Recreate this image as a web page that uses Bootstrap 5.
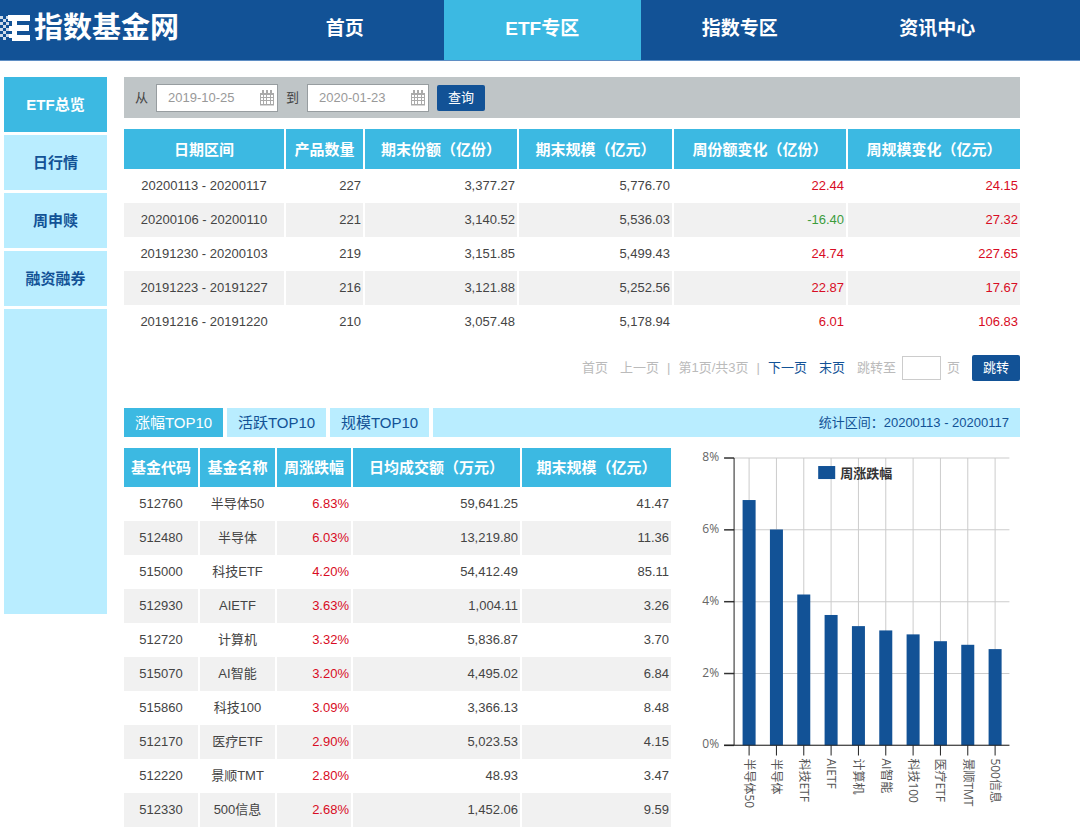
<!DOCTYPE html>
<html lang="zh-CN">
<head>
<meta charset="utf-8">
<meta name="viewport" content="width=device-width, initial-scale=1">
<title>指数基金网</title>
<link href="https://cdn.jsdelivr.net/npm/bootstrap@5.3.0/dist/css/bootstrap.min.css" rel="stylesheet">
<style>
:root{--navy:#125296;--cyan:#3cb9e2;--pale:#b9edff}
body{font-family:"Liberation Sans","Noto Sans CJK SC",sans-serif;font-size:13px;line-height:20px;color:#444;background:#fff}
a{text-decoration:none}
.site-head{background:var(--navy);border-bottom:1px solid #5f8ec4;height:61px}
.brand{width:246px;color:#fff;font-size:29px;font-weight:700;line-height:40px;gap:4px}
.brand:hover{color:#fff}
.top-link{flex:1 1 0;color:#fff;font-size:19px;font-weight:700;line-height:28px;padding:15px 0 17px;text-align:center}
.top-link.active{background:var(--cyan)}
.top-nav{margin-right:44px}
.page-body{padding:16px 60px 8px 4px;gap:17px}
.side{width:103px;gap:3px}
.side a{background:var(--pale);color:var(--navy);font-size:15px;font-weight:700;line-height:23px;padding:16px 0;text-align:center}
.side a.active{background:var(--cyan);color:#fff}
.side-fill{background:var(--pale);height:305px}
.main-col{min-width:0}
.filter{background:#bfc5c7;height:41px;padding:0 11px;margin-bottom:11px}
.date-box{width:122px}
.date-box .form-control{height:28px;border:1px solid #979da0;border-radius:0;padding:0 24px 0 11px;font-size:13px;color:#999}
.date-box svg{position:absolute;right:3px;top:6px}
.btn-go{background:var(--navy);color:#fff;font-size:13px;line-height:20px;border:0;border-radius:2px;padding:3px 11px}
.btn-go:hover{background:#0d4580;color:#fff}
.data-grid{table-layout:fixed;width:100%;border-collapse:separate;border-spacing:0}
.data-grid th,.data-grid td{border-right:2px solid #fff;white-space:nowrap}
.data-grid th:last-child,.data-grid td:last-child{border-right:0}
.data-grid th{background:var(--cyan);color:#fff;font-size:15px;font-weight:700;line-height:23px;padding:8px 0;text-align:center}
.weekly th{padding:9px 0 8px}
.data-grid td{padding:7px 2px;text-align:right}
.data-grid tbody tr:nth-child(even) td{background:#f1f1f1}
.data-grid td.mid{text-align:center}
.data-grid td.up{color:#d80c24}
.data-grid td.down{color:#3c9c3c}
.pager{color:#bbb;margin:16px 0 27px}
.pager a{color:var(--navy)}
.pager .form-control{width:39px;height:24px;border:1px solid #ccc;border-radius:0;padding:0 4px;font-size:13px;margin:0 6px}
.tabs{gap:4px;margin-bottom:11px}
.tabs button{background:var(--pale);color:var(--navy);border:0;font-size:15px;line-height:23px;padding:3px 0;width:99px}
.tabs button.active{background:var(--cyan);color:#fff}
.period{background:var(--pale);color:var(--navy);text-align:right;padding:5px 11px 4px}
.split{display:grid;grid-template-columns:61% 39%}
.chart{width:100%;font-family:"Open Sans","Noto Sans CJK SC",sans-serif;font-size:12px}
</style>
<script src="https://cdn.jsdelivr.net/npm/bootstrap@5.3.0/dist/js/bootstrap.bundle.min.js"></script>
</head>
<body>
<svg width="0" height="0" class="position-absolute" aria-hidden="true">
  <symbol id="cal" viewBox="0 0 16 16"><path d="M1 3h14v12.500H1z" fill="#aaa"/><path d="M3 0h2v3H3zM7 0h2v3H7zM11 0h2v3h-2z" fill="#aaa"/><path d="M2 5h2v2H2zM5 5h2v2H5zM8 5h3v2H8zM12 5h2v2h-2zM2 8h2v2H2zM5 8h2v2H5zM8 8h3v2H8zM12 8h2v2h-2zM2 11h2v3H2zM5 11h2v3H5zM8 11h3v3H8zM12 11h2v3h-2z" fill="#fff"/></symbol>
</svg>
<header class="site-head d-flex">
  <a class="brand d-flex align-items-center flex-shrink-0 pb-1" href="#">
    <svg width="30" height="26" viewBox="0 0 30 26" fill="#fff" aria-hidden="true">
      <path d="M8 0h22v6H17v4h12v6H17v4h13v6H12v-3H9v-4h3v-3H9v-5h3V6H8z"/>
      <path d="M0 1h3v3H0zM3 4h3v3H3zM6 1h3v3H6zM0 7h3v3H0zM6 7h3v3H6zM3 10h3v3H3zM0 13h3v3H0zM6 13h3v3H6zM3 16h3v3H3zM0 19h3v3H0zM6 19h3v3H6zM3 22h3v3H3z" opacity=".8"/>
    </svg>
    <span>指数基金网</span>
  </a>
  <nav class="top-nav d-flex flex-grow-1">
    <a class="top-link" href="#">首页</a>
    <a class="top-link active" href="#">ETF专区</a>
    <a class="top-link" href="#">指数专区</a>
    <a class="top-link" href="#">资讯中心</a>
  </nav>
</header>
<div class="page-body d-flex align-items-start">
  <nav class="side d-flex flex-column flex-shrink-0">
    <a class="active" href="#">ETF总览</a>
    <a href="#">日行情</a>
    <a href="#">周申赎</a>
    <a href="#">融资融券</a>
    <div class="side-fill"></div>
  </nav>
  <main class="main-col flex-grow-1">
    <form class="filter d-flex align-items-center">
      <label for="from" class="me-2">从</label>
      <div class="date-box position-relative me-2"><input id="from" class="form-control" value="2019-10-25"><svg width="16" height="16"><use href="#cal"/></svg></div>
      <label for="to" class="me-2">到</label>
      <div class="date-box position-relative me-2"><input id="to" class="form-control" value="2020-01-23"><svg width="16" height="16"><use href="#cal"/></svg></div>
      <button type="button" class="btn btn-go">查询</button>
    </form>
    <table class="data-grid weekly">
      <colgroup><col width="162"><col width="79"><col width="154"><col width="155"><col width="174"><col width="172"></colgroup>
      <thead><tr><th>日期区间</th><th>产品数量</th><th>期末份额（亿份）</th><th>期末规模（亿元）</th><th>周份额变化（亿份）</th><th>周规模变化（亿元）</th></tr></thead>
      <tbody>
        <tr><td class="mid">20200113 - 20200117</td><td>227</td><td>3,377.27</td><td>5,776.70</td><td class="up">22.44</td><td class="up">24.15</td></tr>
        <tr><td class="mid">20200106 - 20200110</td><td>221</td><td>3,140.52</td><td>5,536.03</td><td class="down">-16.40</td><td class="up">27.32</td></tr>
        <tr><td class="mid">20191230 - 20200103</td><td>219</td><td>3,151.85</td><td>5,499.43</td><td class="up">24.74</td><td class="up">227.65</td></tr>
        <tr><td class="mid">20191223 - 20191227</td><td>216</td><td>3,121.88</td><td>5,252.56</td><td class="up">22.87</td><td class="up">17.67</td></tr>
        <tr><td class="mid">20191216 - 20191220</td><td>210</td><td>3,057.48</td><td>5,178.94</td><td class="up">6.01</td><td class="up">106.83</td></tr>
      </tbody>
    </table>
    <div class="pager d-flex align-items-center justify-content-end">
      <span class="me-2 pe-1">首页</span><span class="me-2">上一页</span><span class="me-2">|</span>
      <span class="me-2">第1页/共3页</span><span class="me-2">|</span>
      <a class="me-2 pe-1" href="#">下一页</a><a class="me-2 pe-1" href="#">末页</a>
      <label for="jump">跳转至</label><input id="jump" class="form-control"><span class="me-2 pe-1">页</span>
      <button type="button" class="btn btn-go">跳转</button>
    </div>
    <div class="tabs d-flex">
      <button type="button" class="active">涨幅TOP10</button>
      <button type="button">活跃TOP10</button>
      <button type="button">规模TOP10</button>
      <div class="period flex-grow-1">统计区间：20200113 - 20200117</div>
    </div>
    <div class="split">
      <table class="data-grid">
        <colgroup><col width="76"><col width="77"><col width="76"><col width="169"><col width="149"></colgroup>
        <thead><tr><th>基金代码</th><th>基金名称</th><th>周涨跌幅</th><th>日均成交额（万元）</th><th>期末规模（亿元）</th></tr></thead>
        <tbody>
          <tr><td class="mid">512760</td><td class="mid">半导体50</td><td class="up">6.83%</td><td>59,641.25</td><td>41.47</td></tr>
          <tr><td class="mid">512480</td><td class="mid">半导体</td><td class="up">6.03%</td><td>13,219.80</td><td>11.36</td></tr>
          <tr><td class="mid">515000</td><td class="mid">科技ETF</td><td class="up">4.20%</td><td>54,412.49</td><td>85.11</td></tr>
          <tr><td class="mid">512930</td><td class="mid">AIETF</td><td class="up">3.63%</td><td>1,004.11</td><td>3.26</td></tr>
          <tr><td class="mid">512720</td><td class="mid">计算机</td><td class="up">3.32%</td><td>5,836.87</td><td>3.70</td></tr>
          <tr><td class="mid">515070</td><td class="mid">AI智能</td><td class="up">3.20%</td><td>4,495.02</td><td>6.84</td></tr>
          <tr><td class="mid">515860</td><td class="mid">科技100</td><td class="up">3.09%</td><td>3,366.13</td><td>8.48</td></tr>
          <tr><td class="mid">512170</td><td class="mid">医疗ETF</td><td class="up">2.90%</td><td>5,023.53</td><td>4.15</td></tr>
          <tr><td class="mid">512220</td><td class="mid">景顺TMT</td><td class="up">2.80%</td><td>48.93</td><td>3.47</td></tr>
          <tr><td class="mid">512330</td><td class="mid">500信息</td><td class="up">2.68%</td><td>1,452.06</td><td>9.59</td></tr>
        </tbody>
      </table>
      <svg class="chart" viewBox="0 0 349 378" role="img" aria-label="周涨跌幅"></svg>
    </div>
  </main>
</div>
<script>
// Weekly change bar chart, drawn from the fund list
const funds=[["半导体50",6.83],["半导体",6.01],["科技ETF",4.2],["AIETF",3.63],["计算机",3.32],["AI智能",3.2],["科技100",3.09],["医疗ETF",2.9],["景顺TMT",2.8],["500信息",2.68]];
const left=63, right=338, top0=10, base=297, step=27.3;
const y=v=>base-v*(base-top0)/8;
let s="";
for(let v=0;v<=8;v+=2){
  s+=`<path d="M${left} ${y(v)}H${right}" stroke="#ccc"/><path d="M53 ${y(v)}h10" stroke="#333" stroke-width="1.500"/>`;
  s+=`<text x="48" y="${y(v)+3}" text-anchor="end" fill="#666">${v}%</text>`;
}
funds.forEach(([name,v],i)=>{
  const x=78+i*step;
  s+=`<path d="M${x} ${top0}V${base}" stroke="#ccc"/><path d="M${x} ${base}v10" stroke="#222"/>`;
  s+=`<rect x="${x-6.5}" y="${y(v)}" width="13" height="${base-y(v)}" fill="#125296"/>`;
  s+=`<text transform="translate(${x-4} 310) rotate(90)" fill="#555">${name}</text>`;
});
s+=`<path d="M${left} ${top0}V${base}M53 ${base}H${right}" stroke="#222" fill="none"/>`;
s+=`<rect x="147" y="18" width="17" height="13" fill="#125296"/><text x="169" y="30" font-size="13" font-weight="700" fill="#333">周涨跌幅</text>`;
document.querySelector(".chart").innerHTML=s;
</script>
</body>
</html>
